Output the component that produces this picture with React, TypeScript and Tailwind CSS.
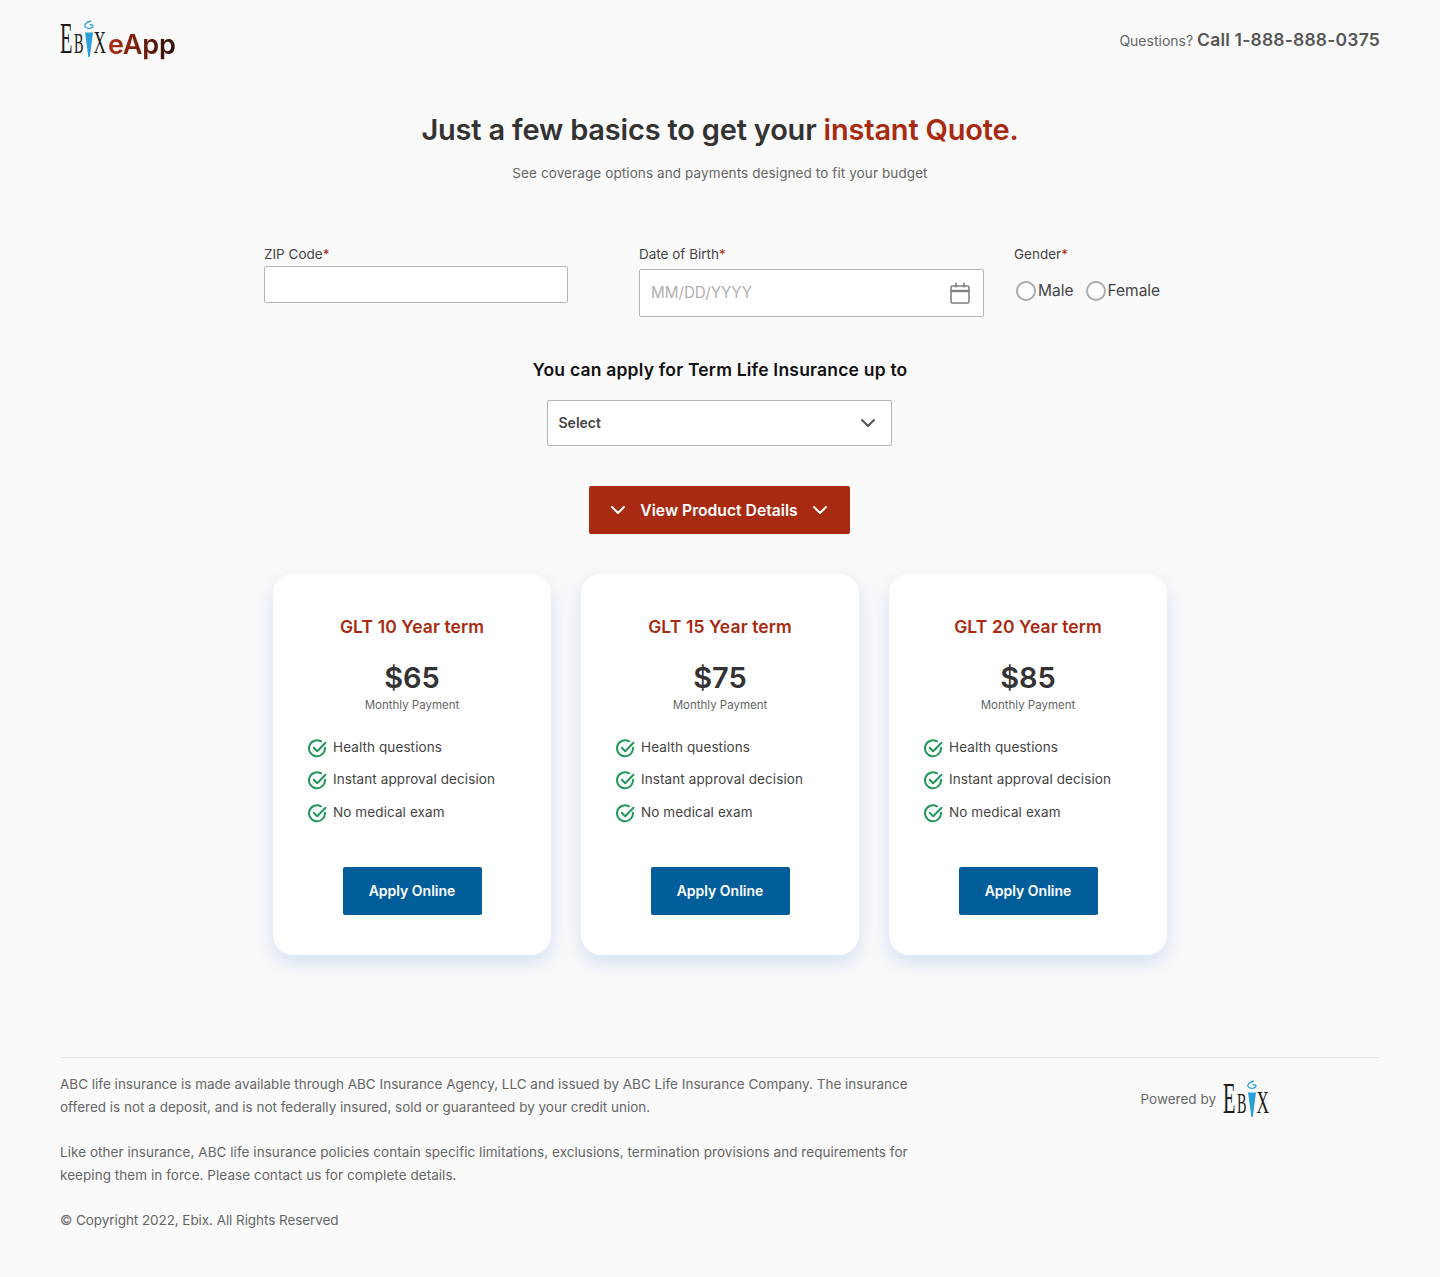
import React from 'react';
import { ChevronDown } from 'lucide-react';

const plans = [
  { title: 'GLT 10 Year term', price: '$65' },
  { title: 'GLT 15 Year term', price: '$75' },
  { title: 'GLT 20 Year term', price: '$85' },
];

const features = ['Health questions', 'Instant approval decision', 'No medical exam'];

const EbixMark: React.FC = () => (
  <svg width="47" height="37" viewBox="0 0 47 37" className="block shrink-0 overflow-visible">
    <g fontFamily="Liberation Serif, serif" fill="#1b1b1b">
      <text x="0" y="33" fontSize="44" textLength="12.500" lengthAdjust="spacingAndGlyphs">E</text>
      <text x="14" y="33" fontSize="29" textLength="9.500" lengthAdjust="spacingAndGlyphs">B</text>
      <text x="33.500" y="33" fontSize="32" textLength="12.500" lengthAdjust="spacingAndGlyphs">X</text>
    </g>
    <path d="M25 12.500h8l-3.200 24.500h-1.400z" fill="#2a9fd8" />
    <path d="M31 1c-4 1-7 3-6 5.500 1 2.200 6.500 2.400 7.800.4.800-1.400-1-2.600-3.300-2" fill="none" stroke="#2a9fd8" strokeWidth="1.300" />
  </svg>
);

const CheckIcon: React.FC = () => (
  <svg width="19" height="19" viewBox="0 0 19 19" fill="none" stroke="#22995a" strokeWidth="2" strokeLinecap="round" strokeLinejoin="round" className="shrink-0">
    <path d="M17 8.800A8 8 0 1 1 13 2.300" />
    <path d="M5.800 8.800l3.400 3.400 8.300-8.400" />
  </svg>
);

const CalendarIcon: React.FC = () => (
  <svg width="20" height="22" viewBox="0 0 20 22" fill="none" stroke="#808080" strokeWidth="1.600">
    <rect x="1" y="4" width="18" height="17" rx="1.500" />
    <path d="M1 9h18" strokeWidth="2.400" />
    <path d="M6 0.500v5M14 0.500v5" />
  </svg>
);

const PlanCard: React.FC<{ title: string; price: string }> = ({ title, price }) => (
  <div className="w-[278px] h-[381px] bg-white rounded-[20px] shadow-[0_8px_20px_rgba(100,150,230,0.26)] pt-[41px] flex flex-col items-center">
    <h3 className="text-[17.500px] leading-6 font-semibold tracking-[0.1px] text-[#a82a10]">{title}</h3>
    <p className="mt-[20px] text-[29px] leading-[38px] font-semibold text-[#333]">{price}</p>
    <p className="text-[11.500px] leading-4 text-[#666]">Monthly Payment</p>
    <ul className="mt-[19px] w-full pl-[35px] text-[#444] text-[13.500px] tracking-[0.1px]">
      {features.map(f => (
        <li key={f} className="h-[32.500px] flex items-center gap-[6px]">
          <CheckIcon />
          <span className="-mt-[3px]">{f}</span>
        </li>
      ))}
    </ul>
    <button className="mt-[37px] w-[139px] h-[48px] bg-[#025e9b] rounded-[2px] text-white text-sm font-semibold">Apply Online</button>
  </div>
);

export default function App() {
  return (
    <div className="min-h-[1277px] bg-[#fafafa] font-['Inter','Liberation_Sans',sans-serif] text-[#444]">
      <header className="h-[84px] px-[60px] flex items-start justify-between">
        <div className="mt-[20px] flex items-start">
          <EbixMark />
          <span className="ml-[1px] mt-[9px] text-[27px] leading-8 font-semibold tracking-[-0.2px] bg-[linear-gradient(90deg,#b32d12,#2a0d06)] bg-clip-text text-transparent">eApp</span>
        </div>
        <p className="mt-[28px] text-sm leading-6 text-[#666]">
          Questions? <span className="text-[17.500px] font-semibold tracking-[0.2px] text-[#555]">Call 1-888-888-0375</span>
        </p>
      </header>

      <main className="flex flex-col items-center">
        <h1 className="mt-[27px] text-[29px] leading-[38px] font-semibold tracking-[-0.2px] text-[#333]">
          Just a few basics to get your <span className="text-[#a82a10]">instant Quote.</span>
        </h1>
        <p className="mt-[14px] text-[13.500px] leading-5 tracking-[0.1px] text-[#666]">See coverage options and payments designed to fit your budget</p>

        <div className="mt-[61px] w-[912px] flex items-start h-[87px]">
          <div className="w-[375px]">
            <label className="block text-[13.500px] leading-5">ZIP Code<span className="text-[#a82a10]">*</span></label>
            <input className="mt-[2px] block w-[304px] h-[37px] bg-white border border-[#b5b5b5] rounded-[2px]" />
          </div>
          <div className="w-[375px]">
            <label className="block text-[13.500px] leading-5">Date of Birth<span className="text-[#a82a10]">*</span></label>
            <div className="mt-[5px] w-[345px] h-[48px] bg-white border border-[#b5b5b5] rounded-[2px] flex items-center justify-between pl-[11px] pr-[13px]">
              <span className="pt-[1px] text-[15.200px] text-[#b0b0b0]">MM/DD/YYYY</span>
              <CalendarIcon />
            </div>
          </div>
          <div>
            <label className="block text-[13.500px] leading-5">Gender<span className="text-[#a82a10]">*</span></label>
            <div className="mt-[15px] flex items-center text-[15.500px]">
              <span className="ml-[2px] w-5 h-5 rounded-full border-2 border-[#aaa] bg-white" />
              <span className="ml-[2px]">Male</span>
              <span className="ml-[12px] w-5 h-5 rounded-full border-2 border-[#aaa] bg-white" />
              <span className="ml-[2px]">Female</span>
            </div>
          </div>
        </div>

        <p className="mt-[27px] text-[17.500px] leading-6 font-semibold tracking-[0.2px] text-[#111]">You can apply for Term Life Insurance up to</p>
        <div className="mt-[18px] mr-[2px] w-[345px] h-[46px] bg-white border border-[#b5b5b5] rounded-[2px] flex items-center justify-between pl-[11px] pr-[11px]">
          <span className="text-sm font-semibold text-[#444]">Select</span>
          <ChevronDown size={24} strokeWidth={2} className="text-[#555]" />
        </div>

        <button className="mt-[40px] mr-[2px] w-[261px] h-[48px] bg-[#a82a10] rounded-[2px] text-white flex items-center justify-center gap-[10px] text-[15.700px] font-semibold">
          <ChevronDown size={24} strokeWidth={2} />
          <span className="pt-[1px]">View Product Details</span>
          <ChevronDown size={24} strokeWidth={2} />
        </button>

        <div className="mt-[40px] flex gap-[30px]">
          {plans.map(p => <PlanCard key={p.title} {...p} />)}
        </div>
      </main>

      <footer className="mt-[102px] mx-[60px] border-t border-[#e5e5e5] pt-[15px] flex justify-between text-[#666] text-[13.500px] leading-[23px]">
        <div className="w-[860px]">
          <p>ABC life insurance is made available through ABC Insurance Agency, LLC and issued by ABC Life Insurance Company. The insurance offered is not a deposit, and is not federally insured, sold or guaranteed by your credit union.</p>
          <p className="mt-[22px] tracking-[0.05px]">Like other insurance, ABC life insurance policies contain specific limitations, exclusions, termination provisions and requirements for keeping them in force. Please contact us for complete details.</p>
          <p className="mt-[22px] tracking-[-0.07px]">© Copyright 2022, Ebix. All Rights Reserved</p>
        </div>
        <div className="mr-[110px] mt-[7px] flex items-center h-[37px] gap-[7px]">
          <span className="pt-[1px]">Powered by</span>
          <EbixMark />
        </div>
      </footer>
    </div>
  );
}
